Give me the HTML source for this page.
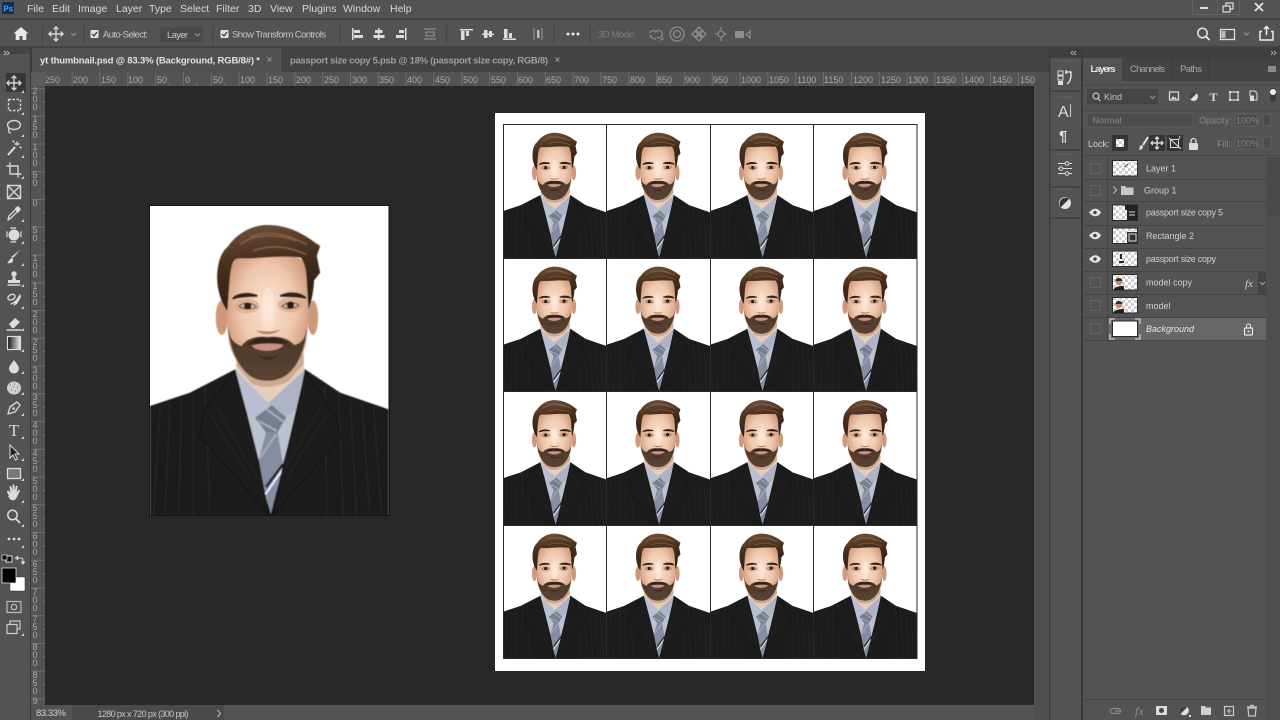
<!DOCTYPE html>
<html><head><meta charset="utf-8"><title>Photoshop</title>
<style>
html,body{margin:0;padding:0;background:#282828;width:1280px;height:720px;overflow:hidden}
svg{display:block;font-family:"Liberation Sans",sans-serif}
.m{font-size:10.5px;fill:#d8d8d8}
.o{font-size:9.5px;fill:#c4c4c4}
.r{font-size:9px;fill:#a8a8a8}
.l{font-size:9px;fill:#cfcfcf}
.ic{fill:none;stroke:#d6d6d6;stroke-width:1.4;stroke-linecap:round;stroke-linejoin:round}
.fi{fill:#dcdcdc}
.dim{fill:none;stroke:#8a8a8a;stroke-width:1.3}
.dimf{fill:#8f8f8f}
</style></head><body>
<svg width="1280" height="720" viewBox="0 0 1280 720" xmlns="http://www.w3.org/2000/svg">
<defs>
<pattern id="ck" width="6" height="6" patternUnits="userSpaceOnUse"><rect width="6" height="6" fill="#fff"/><rect width="3" height="3" fill="#cfcfcf"/><rect x="3" y="3" width="3" height="3" fill="#cfcfcf"/></pattern>
<pattern id="hr" width="27.83" height="14" patternUnits="userSpaceOnUse" patternTransform="translate(183 72)"><path d="M.5 0V14" stroke="#6e6e6e" stroke-width="1"/><path d="M14 11V14" stroke="#6e6e6e" stroke-width="1"/></pattern>
<pattern id="vr" width="14" height="27.75" patternUnits="userSpaceOnUse" patternTransform="translate(31 199)"><path d="M0 .5H14" stroke="#6e6e6e" stroke-width="1"/><path d="M11 14H14" stroke="#6e6e6e" stroke-width="1"/></pattern>
<radialGradient id="face" cx=".5" cy=".42" r=".6"><stop offset="0" stop-color="#fae2d2"/><stop offset=".55" stop-color="#f0c8ae"/><stop offset="1" stop-color="#c98f70"/></radialGradient>
<linearGradient id="hair" x1=".3" y1="0" x2=".5" y2="1"><stop offset="0" stop-color="#6f4e37"/><stop offset=".4" stop-color="#48301f"/><stop offset="1" stop-color="#2a1d16"/></linearGradient>
<linearGradient id="beard" x1="0" y1="0" x2="0" y2="1"><stop offset="0" stop-color="#4a3629"/><stop offset="1" stop-color="#5a4333"/></linearGradient>
<linearGradient id="gr" x1="0" y1="0" x2="1" y2="0"><stop offset="0" stop-color="#111"/><stop offset="1" stop-color="#eee"/></linearGradient>
<filter id="soft" x="-5%" y="-5%" width="110%" height="110%"><feGaussianBlur stdDeviation="1.6"/></filter>
<clipPath id="pc"><rect x="30" y="15" width="715" height="927"/></clipPath>
<symbol id="p" viewBox="30 15 715 927" preserveAspectRatio="none">
<rect x="30" y="15" width="715" height="927" fill="#fff"/>
<g clip-path="url(#pc)"><g filter="url(#soft)">
<path d="M30 615L150 575 285 505 495 505 600 575 745 625V950H30Z" fill="#1b1d1d"/>
<path d="M60 615L40 950M90 605L75 950M125 590L115 950M160 575L160 950M195 555L210 950M630 590L650 950M665 605L690 950M700 615L725 950M595 575L610 950M555 550L560 950" stroke="#303232" stroke-width="2" fill="none"/>
<path d="M285 505L355 790 392 938 430 790 495 510Z" fill="#bcc1d1"/>
<path d="M288 430V510L385 606 492 510V430Z" fill="#e6cfba"/>
<path d="M290 495L335 548Q385 572 445 540L490 490V460H290Z" fill="#cba992"/>
<path d="M286 505L290 510 385 606 345 650 320 612Z" fill="#b9bfd0"/>
<path d="M494 506L490 510 385 606 438 650 468 625Z" fill="#aeb4c6"/>
<path d="M345 650L395 612 438 650 412 695 378 695Z" fill="#767f8e"/>
<path d="M378 695L355 780 375 885 392 935 430 795 412 695Z" fill="#858da1"/>
<path d="M356 660L410 690M380 625L430 662M360 770L408 700" stroke="#a9afc0" stroke-width="6" fill="none"/>
<path d="M376 880L428 805" stroke="#eef" stroke-width="6"/><path d="M378 858L428 790" stroke="#1d1f22" stroke-width="7"/>
<path d="M285 510L190 630 180 705 385 940 355 780 320 640Z" fill="#1c1d1d" stroke="#0f1010" stroke-width="3"/>
<path d="M495 510L590 650 600 712 400 940 430 790 470 640Z" fill="#1c1d1d" stroke="#0f1010" stroke-width="3"/>
<path d="M210 640L330 830M230 620L350 830M560 640L440 830M540 620L420 830" stroke="#2c2e2e" stroke-width="2" fill="none"/>
<ellipse cx="245" cy="350" rx="18" ry="52" fill="#cf987a"/><ellipse cx="518" cy="350" rx="16" ry="52" fill="#cf987a"/>
<path d="M262 210C262 175 285 160 380 160 475 160 502 175 502 210 508 300 505 380 497 430 480 490 430 535 382 537 330 535 285 490 268 430 260 380 258 300 262 210Z" fill="url(#face)"/>
<ellipse cx="385" cy="330" rx="20" ry="70" fill="#fff3ea" opacity=".35"/>
<ellipse cx="320" cy="315" rx="38" ry="22" fill="#d7a487" opacity=".65"/><ellipse cx="450" cy="312" rx="38" ry="22" fill="#d7a487" opacity=".65"/>
<path d="M263 375C268 430 285 490 330 525 360 545 410 545 442 520 482 488 496 430 502 375L497 395C493 420 475 430 462 432 450 415 420 403 382 408 345 403 315 415 305 435 290 430 272 420 268 395Z" fill="url(#beard)"/>
<path d="M322 432C345 410 372 402 382 412 392 402 425 410 447 430 420 424 345 424 322 432Z" fill="#33241b"/>
<path d="M335 434C352 426 412 426 430 432 415 454 350 456 335 434Z" fill="#c99188"/>
<path d="M350 460C365 470 400 470 418 460 405 482 365 482 350 460Z" fill="#3d2b20"/>
<path d="M350 388C360 404 405 404 420 386 405 392 370 393 350 388Z" fill="#b87f63"/>
<path d="M278 293C295 275 330 275 352 285 330 285 300 285 278 293ZM420 285C445 272 480 275 497 291 475 285 445 285 420 285Z" fill="#33241b" stroke="#33241b" stroke-width="6"/>
<path d="M297 316C312 302 335 304 349 318 335 326 310 326 297 316ZM426 316C440 301 463 302 476 313 462 324 440 325 426 316Z" fill="#d8c3b7" stroke="#4a3226" stroke-width="3"/>
<circle cx="323" cy="315" r="11" fill="#2a1b15"/><circle cx="451" cy="312" r="11" fill="#2a1b15"/>
<path d="M262 330C240 300 228 255 232 212 236 170 248 150 265 135 285 105 325 75 375 72 430 70 480 90 525 125L540 135 530 165 540 215 522 238C520 270 515 300 505 325L500 240C498 205 495 188 482 170 440 165 390 168 340 172 310 174 292 168 282 178 268 198 268 260 262 330Z" fill="url(#hair)"/>
<path d="M300 130C340 100 410 95 470 120M330 108C380 88 430 95 500 130M340 150C390 130 440 135 500 160" stroke="#7f5f44" stroke-width="5" fill="none"/>
</g></g>
</symbol>
</defs>

<!-- base -->
<rect width="1280" height="720" fill="#535353"/>
<rect x="0" y="18" width="1280" height="2" fill="#424242"/>
<rect x="0" y="46" width="1280" height="2" fill="#424242"/>
<rect x="31" y="48" width="1018" height="24" fill="#434343"/>
<rect x="0" y="48" width="30" height="6" fill="#444"/>
<rect x="32" y="48" width="249" height="24" fill="#515151"/>
<rect x="45" y="86" width="989" height="619" fill="#282828"/>
<rect x="30" y="48" width="1.4" height="672" fill="#383838"/>
<rect x="31" y="72" width="1003" height="14" fill="#535353"/>
<rect x="31" y="72" width="1003" height="14" fill="url(#hr)"/>
<rect x="31" y="86" width="14" height="619" fill="#535353"/>
<rect x="31" y="86" width="14" height="619" fill="url(#vr)"/>
<rect x="31" y="72" width="14" height="14" fill="#5c5c5c"/>
<rect x="1034" y="72" width="15" height="648" fill="#4f4f4f"/>
<rect x="31" y="705" width="1003" height="15" fill="#4c4c4c"/>
<rect x="31" y="705" width="41" height="15" fill="#535353"/>
<rect x="72" y="705" width="152" height="15" fill="#4a4a4a"/>
<rect x="224" y="705" width="810" height="15" fill="#535353"/>

<!-- menu -->
<rect x="2" y="2" width="12" height="12" rx="1.5" fill="#0a2f57"/>
<text x="3.4" y="11.4" font-size="8" font-weight="bold" fill="#4ba7f0">Ps</text>
<g class="m">
<text class="m" x="27" y="12">File</text><text class="m" x="52" y="12">Edit</text><text class="m" x="78" y="12">Image</text><text class="m" x="116" y="12">Layer</text><text class="m" x="149" y="12">Type</text><text class="m" x="180" y="12">Select</text><text class="m" x="216" y="12">Filter</text><text class="m" x="248" y="12">3D</text><text class="m" x="270" y="12">View</text><text class="m" x="302" y="12">Plugins</text><text class="m" x="343" y="12">Window</text><text class="m" x="390" y="12">Help</text>
</g>
<!-- window controls -->
<path d="M1192.5 15V.5M1217.5 15V0M1239.5 15V0M1192 14.5H1239" stroke="#636363" fill="none"/>
<rect x="1200" y="7" width="8" height="2" fill="#ddd"/>
<path d="M1223 6h7v6h-7zM1226 6V3h7v6h-3" fill="none" stroke="#ddd" stroke-width="1.2"/>
<path d="M1255 3l8 8M1263 3l-8 8" stroke="#e2e2e2" stroke-width="1.8"/>

<!-- options bar -->
<path d="M21 27l-7.5 6.5h2.2V40h3.8v-4h3v4h3.8v-6.500h2.200z" fill="#e8e8e8"/>
<path d="M42.500 25V44M84 25V44M213 25V44M340 25V44M446.500 25V44M554 25V44M590 25V44" stroke="#444" stroke-width="1.2"/>
<path d="M56 27v14M49 34h14" class="ic"/><path d="M54 29l2-2 2 2M54 39l2 2 2-2M51 32l-2 2 2 2M61 32l2 2-2 2" class="ic"/>
<path d="M71 33l2.500 2.500 2.500-2.500" class="dim"/>
<rect x="90.500" y="30" width="8" height="8" rx="1" fill="#e0e0e0"/><path d="M92 34l2 2 3-4" stroke="#333" stroke-width="1.2" fill="none"/>
<text class="o" x="103" y="37.500" textLength="45">Auto-Select:</text>
<rect x="160" y="27" width="43" height="15" fill="#4a4a4a"/>
<text class="o" x="167" y="38" textLength="21">Layer</text><path d="M195 33.500l2.500 2.500 2.500-2.500" class="dim"/>
<rect x="220.500" y="30" width="8" height="8" rx="1" fill="#e0e0e0"/><path d="M222 34l2 2 3-4" stroke="#333" stroke-width="1.2" fill="none"/>
<text class="o" x="232" y="37.500" textLength="94">Show Transform Controls</text>
<!-- align -->
<g class="fi">
<path d="M352 28h1.500v12H352zM354 30h6v3h-6zM354 35h9v3h-9z"/>
<path d="M378 28h1.500v12H378zM375 30h7.500v3H375zM373.500 35h11v3h-11z"/>
<path d="M405 28h1.500v12H405zM399 30h5v3h-5zM396 35h8v3h-8z"/>
<path d="M460 29h13v1.500h-13zM461 31h3.500v9H461zM466 31h3v5h-3z"/>
<path d="M482 33.500h12v1.500h-12zM484 30h3.500v8H484zM489 31h3v6h-3z"/>
<path d="M503 38.500h13v1.500h-13zM504 29h3.500v9H504zM509 33h3v5h-3z"/>
</g>
<path d="M424 29h12M424 39h12M426 32h8v4h-8z" stroke="#9a9a9a" fill="none"/>
<path d="M534 28v12M542 28v12" stroke="#999"/><rect x="537" y="30" width="2.500" height="8" fill="#bbb"/>
<circle cx="568" cy="34" r="1.500" fill="#e8e8e8"/><circle cx="573" cy="34" r="1.500" fill="#e8e8e8"/><circle cx="578" cy="34" r="1.500" fill="#e8e8e8"/>
<text x="598" y="37.500" font-size="9.500" fill="#7d7d7d" textLength="38">3D Mode:</text>
<g class="dim">
<path d="M650 33c1-3 5-3 6-1 2-3 7-1 6 2 1 3-3 5-5 3M650 35c1 3 3 4 6 4M664 38c-1 1-2 2-4 2"/>
<circle cx="677" cy="34" r="7"/><circle cx="677" cy="34" r="3.500"/>
<path d="M699 27l3 3-3 3-3-3zM699 35l3 3-3 3-3-3zM695 31l3 3-3 3-3-3zM703 31l3 3-3 3-3-3z"/>
<path d="M721 27v3M721 38v3M715 34h3M724 34h3"/><circle cx="721" cy="34" r="3"/>
</g>
<rect x="735" y="31" width="9" height="7" fill="#8f8f8f"/><path d="M746 34.500l4-3.500v7z" class="dim"/>
<!-- right options -->
<circle cx="1202.500" cy="33" r="4.700" fill="none" stroke="#e6e6e6" stroke-width="1.500"/><path d="M1206 36.500l3.500 3.500" stroke="#e6e6e6" stroke-width="1.800"/>
<rect x="1220.500" y="29.500" width="14" height="10" fill="none" stroke="#ddd" stroke-width="1.300"/><rect x="1221.500" y="31" width="4" height="7" fill="#bbb"/>
<path d="M1244 32.500l2.500 2.500 2.500-2.500" class="dim"/>
<path d="M1262 31.500h-2v8.500h13v-8.500h-2M1266.500 35v-8.500M1264 29l2.500-2.500 2.500 2.500" fill="none" stroke="#eee" stroke-width="1.500"/>

<!-- tabs -->
<text x="40" y="63.500" font-size="9.500" font-weight="bold" fill="#e2e2e2" textLength="220">yt thumbnail.psd @ 83.3% (Background, RGB/8#) *</text>
<path d="M267.500 57.500l4 4M271.500 57.500l-4 4" stroke="#999"/>
<text x="290" y="63.500" font-size="9.500" font-weight="bold" fill="#9f9f9f" textLength="258">passport size copy 5.psb @ 18% (passport size copy, RGB/8)</text>
<path d="M555.500 57.500l4 4M559.500 57.500l-4 4" stroke="#999"/>
<path d="M4 51l2 2-2 2M7 51l2 2-2 2" stroke="#bbb" fill="none"/>

<!-- rulers -->
<g class="r">
<text class="r" x="45" y="83">250</text><text class="r" x="73" y="83">200</text><text class="r" x="101" y="83">150</text><text class="r" x="128" y="83">100</text><text class="r" x="157" y="83">50</text><text class="r" x="185" y="83">0</text><text class="r" x="213" y="83">50</text><text class="r" x="240" y="83">100</text><text class="r" x="268" y="83">150</text><text class="r" x="296" y="83">200</text><text class="r" x="324" y="83">250</text><text class="r" x="352" y="83">300</text><text class="r" x="379" y="83">350</text><text class="r" x="407" y="83">400</text><text class="r" x="435" y="83">450</text><text class="r" x="463" y="83">500</text><text class="r" x="491" y="83">550</text><text class="r" x="518" y="83">600</text><text class="r" x="546" y="83">650</text><text class="r" x="574" y="83">700</text><text class="r" x="602" y="83">750</text><text class="r" x="630" y="83">800</text><text class="r" x="657" y="83">850</text><text class="r" x="685" y="83">900</text><text class="r" x="713" y="83">950</text><text class="r" x="741" y="83">1000</text><text class="r" x="769" y="83">1050</text><text class="r" x="797" y="83">1100</text><text class="r" x="824" y="83">1150</text><text class="r" x="853" y="83">1200</text><text class="r" x="881" y="83">1250</text><text class="r" x="908" y="83">1300</text><text class="r" x="936" y="83">1350</text><text class="r" x="964" y="83">1400</text><text class="r" x="992" y="83">1450</text><text class="r" x="1020" y="83">150</text>
</g>
<g class="r" text-anchor="middle">
<text class="r" x="35"><tspan x="35" y="94">2</tspan><tspan x="35" y="102">0</tspan><tspan x="35" y="110">0</tspan></text>
<text class="r" x="35"><tspan x="35" y="122">1</tspan><tspan x="35" y="130">5</tspan><tspan x="35" y="138">0</tspan></text>
<text class="r" x="35"><tspan x="35" y="150">1</tspan><tspan x="35" y="158">0</tspan><tspan x="35" y="166">0</tspan></text>
<text class="r" x="35"><tspan x="35" y="178">5</tspan><tspan x="35" y="186">0</tspan></text>
<text class="r" x="35" y="206">0</text>
<text class="r" x="35"><tspan x="35" y="233">5</tspan><tspan x="35" y="241">0</tspan></text>
<text class="r" x="35"><tspan x="35" y="261">1</tspan><tspan x="35" y="269">0</tspan><tspan x="35" y="277">0</tspan></text>
<text class="r" x="35"><tspan x="35" y="289">1</tspan><tspan x="35" y="297">5</tspan><tspan x="35" y="305">0</tspan></text>
<text class="r" x="35"><tspan x="35" y="317">2</tspan><tspan x="35" y="325">0</tspan><tspan x="35" y="333">0</tspan></text>
<text class="r" x="35"><tspan x="35" y="345">2</tspan><tspan x="35" y="353">5</tspan><tspan x="35" y="361">0</tspan></text>
<text class="r" x="35"><tspan x="35" y="373">3</tspan><tspan x="35" y="381">0</tspan><tspan x="35" y="389">0</tspan></text>
<text class="r" x="35"><tspan x="35" y="400">3</tspan><tspan x="35" y="408">5</tspan><tspan x="35" y="416">0</tspan></text>
<text class="r" x="35"><tspan x="35" y="428">4</tspan><tspan x="35" y="436">0</tspan><tspan x="35" y="444">0</tspan></text>
<text class="r" x="35"><tspan x="35" y="456">4</tspan><tspan x="35" y="464">5</tspan><tspan x="35" y="472">0</tspan></text>
<text class="r" x="35"><tspan x="35" y="484">5</tspan><tspan x="35" y="492">0</tspan><tspan x="35" y="500">0</tspan></text>
<text class="r" x="35"><tspan x="35" y="511">5</tspan><tspan x="35" y="519">5</tspan><tspan x="35" y="527">0</tspan></text>
<text class="r" x="35"><tspan x="35" y="539">6</tspan><tspan x="35" y="547">0</tspan><tspan x="35" y="555">0</tspan></text>
<text class="r" x="35"><tspan x="35" y="567">6</tspan><tspan x="35" y="575">5</tspan><tspan x="35" y="583">0</tspan></text>
<text class="r" x="35"><tspan x="35" y="595">7</tspan><tspan x="35" y="603">0</tspan><tspan x="35" y="611">0</tspan></text>
<text class="r" x="35"><tspan x="35" y="622">7</tspan><tspan x="35" y="630">5</tspan><tspan x="35" y="638">0</tspan></text>
<text class="r" x="35"><tspan x="35" y="650">8</tspan><tspan x="35" y="658">0</tspan><tspan x="35" y="666">0</tspan></text>
<text class="r" x="35"><tspan x="35" y="678">8</tspan><tspan x="35" y="686">5</tspan><tspan x="35" y="694">0</tspan></text>
<text class="r" x="35" y="704">9</text>
</g>

<!-- toolbar -->
<rect x="6" y="73" width="20" height="19" fill="#383838"/>
<g transform="translate(14 83)"><path d="M0-7V7M-7 0H7M-2-5L0-7 2-5M-2 5L0 7 2 5M-5-2L-7 0-5 2M5-2L7 0 5 2" class="ic"/></g>
<rect x="8.500" y="99.500" width="12" height="11" fill="none" stroke="#d6d6d6" stroke-width="1.400" stroke-dasharray="2.500 1.500"/>
<g transform="translate(14 127)"><ellipse cx="0" cy="-2" rx="6.500" ry="4.500" class="ic"/><path d="M-5 1c-1 3 0 4 1 5" class="ic"/></g>
<g transform="translate(14 148)"><path d="M-6 7L1-1" stroke="#ddd" stroke-width="2"/><path d="M3-6v3M1-4h4M6-1l1 1M-1-7l1 1" class="ic"/></g>
<g transform="translate(14 170)"><path d="M-4-7V4H7M-7-4H4V7" class="ic" stroke-width="2"/></g>
<g transform="translate(14 192)"><rect x="-6.500" y="-6.500" width="13" height="13" class="ic"/><path d="M-6.500-6.500L6.500 6.500M6.500-6.500L-6.500 6.500" class="ic"/></g>
<g transform="translate(14 213)"><path d="M-6 7L-5 3 2-4 4-2-3 5Z" class="ic"/><path d="M1-5L4-7 7-4 5-1 3 0Z" class="fi"/></g>
<g transform="translate(14 235)"><circle r="5.500" class="fi"/><path d="M-7-3v6M7-3v6M-3-7h6M-3 7h6" class="ic" stroke-dasharray="1.500 1.500"/></g>
<g transform="translate(14 257)"><path d="M6-7L-1 1-3 0Z" class="fi"/><path d="M-2 1C-5 2-5 5-7 6-3 7 0 5-1 2Z" class="fi"/></g>
<g transform="translate(14 278)"><circle cy="-4" r="2.700" class="fi"/><path d="M-1-2h2l1 4h-4zM-6 2h12v3h-12z" class="fi"/><path d="M-6 7h12" class="ic"/></g>
<g transform="translate(14 300)"><path d="M-6-3C-3-7 2-6 1-3-1 1-7 1-6-3ZM-3 4C2 2 4-1 6-5" class="ic"/><path d="M6-5L1 2-1 6 3 4 7-3Z" class="fi"/></g>
<g transform="translate(14 323)"><path d="M-5 1L1-5 6-1 0 5H-2Z" class="fi"/><path d="M-7 7H7" class="ic"/></g>
<rect x="7.500" y="336.500" width="13" height="13" fill="url(#gr)" stroke="#ddd" stroke-width="1.200"/>
<path d="M14 360c2 3 5 6 5 8.500a5 5 0 0 1-10 0c0-2.500 3-5.500 5-8.500z" class="fi"/>
<ellipse cx="14" cy="388" rx="7" ry="6.500" fill="#cfcfcf"/><path d="M10 385h1M14 384h1M17 387h1M11 390h1M15 391h1M13 387h1" stroke="#666"/>
<g transform="translate(14 408)"><path d="M-6 6L-4-1 3-6 6-3 1 4Z" class="ic"/><circle cx="-.5" cy=".5" r="1.300" class="fi"/></g>
<text x="14" y="436" text-anchor="middle" font-family="Liberation Serif,serif" font-size="17" fill="#dcdcdc">T</text>
<path d="M10 445v13l3-3 2.500 5 2-1-2.500-5h4z" fill="#222" stroke="#ddd"/>
<rect x="7.500" y="468.500" width="13" height="10" fill="#777" stroke="#ddd" stroke-width="1.300"/>
<path d="M9 496l-2-4c-.5-1 1-2 2-1l1.500 2-1-6c0-1.300 1.700-1.300 2 0l.8 4 .3-5.500c0-1.300 1.800-1.300 1.900 0l.2 5.500 1-4.500c.3-1.200 2-1 1.800.3l-.8 5.500 1.500-2c.7-1 2.200 0 1.600 1l-3 6c-1 2-2 3-4 3s-3-1-4.800-4.300z" class="fi"/>
<circle cx="12.500" cy="515" r="4.700" fill="none" stroke="#ddd" stroke-width="1.500"/><path d="M16 519l4 4" stroke="#ddd" stroke-width="1.800"/>
<circle cx="9" cy="539" r="1.400" class="fi"/><circle cx="14" cy="539" r="1.400" class="fi"/><circle cx="19" cy="539" r="1.400" class="fi"/>
<rect x="6" y="556" width="6" height="6" fill="#111" stroke="#ddd"/><rect x="2" y="555" width="5" height="5" fill="#111" stroke="#ddd" stroke-width=".7"/>
<path d="M17 558h4a2 2 0 0 1 2 2v3M15.500 558l2-1.500v3zM23 564l-1.500-2h3z" fill="none" stroke="#ddd"/>
<rect x="10" y="577" width="15" height="14" fill="#fff" stroke="#333" stroke-width=".5"/>
<rect x="2" y="568" width="14" height="15" fill="#000" stroke="#ddd" stroke-width=".8"/>
<rect x="7" y="601.500" width="14" height="11" fill="none" stroke="#bbb" stroke-width="1.200"/><circle cx="14" cy="607" r="2.700" fill="none" stroke="#bbb" stroke-width="1.200"/>
<path d="M7 624.500h10v9H7zM10 624.500v-3.500h10v8h-3" fill="none" stroke="#ccc" stroke-width="1.200"/>
<g fill="#ccc"><path d="M24 90l-3 3h3zM24 112l-3 3h3zM24 134l-3 3h3zM24 155l-3 3h3zM24 176l-3 3h3zM24 219l-3 3h3zM24 241l-3 3h3zM24 263l-3 3h3zM24 284l-3 3h3zM24 306l-3 3h3zM24 328l-3 3h3zM24 349l-3 3h3zM24 371l-3 3h3zM24 392l-3 3h3zM24 413l-3 3h3zM24 436l-3 3h3zM24 458l-3 3h3zM24 478l-3 3h3zM24 500l-3 3h3zM24 524l-3 3h3zM24 545l-3 3h3zM24 633l-3 3h3z"/></g>

<!-- canvas: left portrait -->
<rect x="149" y="205" width="241" height="311" fill="#141414"/>
<use href="#p" x="150" y="206" width="238.500" height="309"/>

<!-- sheet -->
<rect x="495" y="113" width="430" height="558" fill="#fff"/>
<use href="#p" x="503.500" y="124.500" width="103" height="133.500"/><use href="#p" x="607" y="124.500" width="103" height="133.500"/><use href="#p" x="710.500" y="124.500" width="103" height="133.500"/><use href="#p" x="814" y="124.500" width="103" height="133.500"/>
<use href="#p" x="503.500" y="258.500" width="103" height="133"/><use href="#p" x="607" y="258.500" width="103" height="133"/><use href="#p" x="710.500" y="258.500" width="103" height="133"/><use href="#p" x="814" y="258.500" width="103" height="133"/>
<use href="#p" x="503.500" y="392" width="103" height="133"/><use href="#p" x="607" y="392" width="103" height="133"/><use href="#p" x="710.500" y="392" width="103" height="133"/><use href="#p" x="814" y="392" width="103" height="133"/>
<use href="#p" x="503.500" y="525.500" width="103" height="133"/><use href="#p" x="607" y="525.500" width="103" height="133"/><use href="#p" x="710.500" y="525.500" width="103" height="133"/><use href="#p" x="814" y="525.500" width="103" height="133"/>
<path d="M503.500 124.500H917M503.500 258.500H917M503.500 391.500H917M503.500 525.500H917M503.500 658.500H917M503.500 124V659M606.500 124V659M710.500 124V659M813.500 124V659M917 124V659" stroke="#2a2a2a" stroke-width="1" fill="none"/>

<!-- status -->
<text x="36" y="716" font-size="9.500" fill="#cfcfcf" textLength="30">83.33%</text>
<text x="97.500" y="717" font-size="9" fill="#c4c4c4" textLength="91">1280 px x 720 px (300 ppi)</text>
<path d="M217.500 710l3 3.500-3 3.500" fill="none" stroke="#bbb"/>

<!-- right panels -->
<rect x="1049" y="48" width="231" height="10" fill="#3f3f3f"/>
<rect x="1049" y="48" width="1.500" height="672" fill="#3c3c3c"/>
<rect x="1081" y="48" width="2" height="672" fill="#3c3c3c"/>
<path d="M1076 51l-2 2 2 2M1073 51l-2 2 2 2M1271 51l2 2-2 2M1274 51l2 2-2 2" stroke="#aaa" fill="none"/>
<path d="M1050 91h31M1050 150h31M1050 187h31M1050 218h31" stroke="#3f3f3f" stroke-width="1.500"/>
<path d="M1058 61h16M1058 97h16M1058 154h16M1058 189h16" stroke="#707070" stroke-dasharray="1.500 1.500"/>
<!-- strip icons -->
<rect x="1058" y="71" width="5" height="4" fill="none" stroke="#ddd"/><rect x="1058" y="76" width="5" height="4" fill="none" stroke="#ddd"/><rect x="1058" y="81" width="5" height="4" class="fi"/>
<path d="M1066 72h5v3c0 4-1 7-4 9M1066 70v4" fill="none" stroke="#ddd" stroke-width="1.500"/>
<text x="1058" y="117" font-size="16" fill="#dedede">A</text><path d="M1070.500 104v13" stroke="#ccc"/>
<text x="1059" y="141" font-size="15" font-weight="bold" fill="#dedede">¶</text>
<path d="M1058 163.500h14M1058 168.500h14M1058 173.500h14" stroke="#ddd"/><circle cx="1067" cy="163.500" r="1.800" fill="#535353" stroke="#ddd"/><circle cx="1061" cy="168.500" r="1.800" fill="#535353" stroke="#ddd"/><circle cx="1067" cy="173.500" r="1.800" fill="#535353" stroke="#ddd"/>
<circle cx="1065" cy="203" r="6" fill="#e2e2e2"/><path d="M1060.800 207.200a6 6 0 0 1 8.400-8.400z" fill="#333"/>

<!-- panel tabs -->
<rect x="1083" y="58" width="197" height="23" fill="#434343"/>
<rect x="1083" y="58" width="39" height="23" fill="#535353"/>
<path d="M1172.500 58v23" stroke="#3d3d3d"/><path d="M1208.500 58v23" stroke="#3d3d3d"/>
<text x="1090.500" y="72" font-size="9.500" font-weight="bold" fill="#e6e6e6" textLength="25">Layers</text>
<text x="1130" y="72" font-size="9.500" fill="#a8a8a8" textLength="35">Channels</text>
<text x="1180" y="72" font-size="9.500" fill="#a8a8a8" textLength="22">Paths</text>
<rect x="1268" y="66" width="8" height="6" fill="#8a8a8a"/>
<!-- filter row -->
<rect x="1087" y="89" width="71" height="15" fill="#454545"/>
<circle cx="1096" cy="96" r="3" fill="none" stroke="#ccc" stroke-width="1.200"/><path d="M1098 98.500l2.500 2.500" stroke="#ccc" stroke-width="1.200"/>
<text x="1104" y="100" font-size="9" fill="#c4c4c4">Kind</text>
<path d="M1150 96l2.500 2.500 2.500-2.500" class="dim"/>
<rect x="1169.500" y="92" width="9" height="8" fill="none" stroke="#ddd" stroke-width="1.200"/><path d="M1171 99l2-3 1.500 2 1-1 1.500 2z" class="fi"/>
<circle cx="1193.500" cy="96.500" r="4.500" fill="#ddd"/><path d="M1190.300 99.700a4.500 4.500 0 0 1 6.400-6.400z" fill="#444"/>
<text x="1213.500" y="101" text-anchor="middle" font-family="Liberation Serif,serif" font-size="12" font-weight="bold" fill="#ddd">T</text>
<rect x="1230" y="92" width="8" height="8" fill="none" stroke="#ddd" stroke-width="1.200"/><path d="M1229 91h2v2h-2zM1237 91h2v2h-2zM1229 99h2v2h-2zM1237 99h2v2h-2z" class="fi"/>
<path d="M1250 91h5l2 2v7h-4v-4h-3z" fill="none" stroke="#ddd"/><rect x="1250" y="96" width="4" height="5" class="fi"/>
<rect x="1270" y="88" width="6" height="14" rx="3" fill="#3a3a3a"/><circle cx="1273" cy="92" r="3" fill="#eee"/>
<path d="M1083 85H1280M1083 111H1280" stroke="#474747"/>
<!-- blend row -->
<rect x="1087" y="113" width="106" height="14" fill="#4c4c4c" stroke="#5a5a5a"/>
<text x="1092.500" y="123.500" font-size="9" fill="#858585">Normal</text>
<text x="1199" y="123.500" font-size="9" fill="#858585">Opacity:</text>
<rect x="1235" y="114" width="23" height="12" fill="#4c4c4c" stroke="#5f5f5f"/><text x="1236" y="123.500" font-size="9" fill="#808080">100%</text>
<rect x="1263" y="114" width="8" height="12" fill="#4c4c4c" stroke="#5f5f5f"/>
<!-- lock row -->
<text x="1088" y="147" font-size="9" fill="#cfcfcf">Lock:</text>
<rect x="1112" y="135" width="16" height="16" fill="#343434"/><rect x="1116" y="139" width="8" height="8" fill="url(#ck)"/>
<path d="M1148 137l-5 8" stroke="#ddd" stroke-width="2"/><path d="M1139 150c2 0 4-1 4-4l-2-1c-2 1-1 4-2 5z" class="fi"/>
<rect x="1149" y="135" width="16" height="16" fill="#343434"/>
<path d="M1157 137v12M1151 143h12M1155.500 138.500l1.500-1.500 1.500 1.500M1155.500 147.500l1.500 1.500 1.500-1.500M1152.500 141.500l-1.500 1.500 1.500 1.500M1161.500 141.500l1.500 1.500-1.500 1.500" class="ic" stroke-width="1"/>
<rect x="1167" y="135" width="16" height="16" fill="#343434"/>
<rect x="1170.500" y="139.500" width="8" height="8" fill="none" stroke="#ddd"/><path d="M1169 138l12 11M1180 136l-1 3" stroke="#ddd" fill="none"/>
<rect x="1189" y="143" width="9" height="7" rx="1" class="fi"/><path d="M1191 143v-2a2.500 2.500 0 0 1 5 0v2" fill="none" stroke="#ddd" stroke-width="1.300"/>
<text x="1217" y="147" font-size="9" fill="#858585">Fill:</text>
<rect x="1235" y="137" width="23" height="12" fill="#4c4c4c" stroke="#5f5f5f"/><text x="1236" y="146.500" font-size="9" fill="#808080">100%</text>
<rect x="1263" y="137" width="8" height="12" fill="#4c4c4c" stroke="#5f5f5f"/>
<path d="M1083 155.500H1280" stroke="#474747"/>

<!-- layers -->
<rect x="1108" y="318" width="158" height="22.500" fill="#676767"/>
<rect x="1266" y="157" width="14" height="563" fill="#4e4e4e"/>
<rect x="1266" y="157" width="14" height="60" fill="#4b4b4b"/>
<path d="M1083 179.500H1266M1083 201.500H1266M1083 225.500H1266M1083 248.500H1266M1083 271.500H1266M1083 294.500H1266M1083 317.500H1266M1083 340.500H1266" stroke="#444"/>
<path d="M1107.500 157V341" stroke="#444"/>
<g fill="none" stroke="#636363"><rect x="1090.500" y="163.500" width="10" height="10"/><rect x="1090.500" y="185.500" width="10" height="10"/><rect x="1090.500" y="277.500" width="10" height="10"/><rect x="1090.500" y="300.500" width="10" height="10"/><rect x="1090.500" y="323.500" width="10" height="10"/></g>
<g fill="#e6e6e6">
<path d="M1089 212.500c4-5 9-5 12 0-3 5-8 5-12 0z"/><path d="M1089 235.500c4-5 9-5 12 0-3 5-8 5-12 0z"/><path d="M1089 259c4-5 9-5 12 0-3 5-8 5-12 0z"/>
</g>
<circle cx="1095" cy="212.500" r="1.800" fill="#444"/><circle cx="1095" cy="235.500" r="1.800" fill="#444"/><circle cx="1095" cy="259" r="1.800" fill="#444"/>
<g stroke="#2a2a2a" stroke-width="1">
<rect x="1112.500" y="160.500" width="25" height="15.500" fill="url(#ck)"/>
<rect x="1112.500" y="205" width="25" height="15.500" fill="url(#ck)"/>
<rect x="1112.500" y="228" width="25" height="15.500" fill="url(#ck)"/>
<rect x="1112.500" y="251" width="25" height="15.500" fill="url(#ck)"/>
<rect x="1112.500" y="274.500" width="25" height="15.500" fill="url(#ck)"/>
<rect x="1112.500" y="297.500" width="25" height="15.500" fill="url(#ck)"/>
<rect x="1112.500" y="321" width="25" height="15.500" fill="#fff"/>
</g>
<path d="M1124 167l4-3" stroke="#444"/>
<g fill="#222"><rect x="1125" y="205" width="12" height="5"/><rect x="1127" y="210" width="10" height="10"/></g>
<path d="M1129 212h6M1129 215h6" stroke="#ddd"/>
<rect x="1127" y="232" width="11" height="11" fill="#333"/><rect x="1129" y="234" width="7" height="7" fill="none" stroke="#ddd"/>
<path d="M1121 254v5M1119 262h5" stroke="#222" stroke-width="2"/>
<path d="M1113 290c2-3 5-4 11-4v4z" fill="#1e1e1e"/><circle cx="1119" cy="281.500" r="3.500" fill="#c28a6b"/><path d="M1115.500 281c0-4 7-4 7 0z" fill="#412c20"/>
<path d="M1113 313c2-3 5-4 11-4v4z" fill="#1e1e1e"/><circle cx="1119" cy="304.500" r="3.500" fill="#c28a6b"/><path d="M1115.500 304c0-4 7-4 7 0z" fill="#412c20"/>
<path d="M1110 324v-5h5M1140 324v-5h-5M1110 334v5h5M1140 334v5h-5" stroke="#e4e4e4" stroke-width="1" fill="none"/>
<path d="M1113.500 186.500l3 3.500-3 3.500" fill="none" stroke="#bbb"/>
<path d="M1121 186h4l1 1.500h7.500v7.500h-12.500z" fill="#c8c8c8"/>
<text class="l" x="1146" y="171.500">Layer 1</text>
<text class="l" x="1144" y="193.500">Group 1</text>
<text class="l" x="1146" y="215.500" textLength="77">passport size copy 5</text>
<text class="l" x="1146" y="239">Rectangle 2</text>
<text class="l" x="1146" y="262" textLength="70">passport size copy</text>
<text class="l" x="1146" y="285.500">model copy</text>
<text class="l" x="1146" y="309">model</text>
<text x="1146" y="332" font-size="9" font-style="italic" fill="#e8e8e8">Background</text>
<text x="1245" y="287" font-family="Liberation Serif,serif" font-size="11" font-style="italic" fill="#cfcfcf">fx</text>
<rect x="1258" y="271" width="8" height="23" fill="#444"/><path d="M1260 282l2.500 2.500 2.500-2.500" stroke="#aaa" fill="none"/>
<rect x="1244.500" y="328" width="8" height="7" rx="1" fill="none" stroke="#e8e8e8" stroke-width="1.200"/><path d="M1246.500 328v-2a2 2 0 0 1 4 0v2" fill="none" stroke="#e8e8e8"/><circle cx="1248.500" cy="331.500" r="1" fill="#e8e8e8"/>

<!-- panel footer -->
<path d="M1083 699.500H1266" stroke="#474747"/>
<path d="M1113 708.500h5a2.500 2.500 0 0 1 0 5h-5a2.500 2.500 0 0 1 0-5zM1115 711h5" fill="none" stroke="#8a8a8a" stroke-width="1.200"/>
<text x="1135" y="715" font-family="Liberation Serif,serif" font-size="12" font-style="italic" fill="#8e8e8e">fx</text>
<rect x="1156" y="706" width="11" height="9" class="fi"/><circle cx="1161.500" cy="710.500" r="2.500" fill="#444"/>
<circle cx="1184" cy="710.500" r="4.800" fill="#e0e0e0"/><path d="M1180.600 713.900a4.800 4.800 0 0 1 6.800-6.800z" fill="#444"/><rect x="1189" y="715" width="2" height="2" fill="#ddd"/>
<path d="M1201 706h4l1 1.500h5v7.500h-10z" fill="#d0d0d0"/>
<rect x="1224.500" y="706.500" width="9" height="9" fill="none" stroke="#c8c8c8" stroke-width="1.200"/><path d="M1229 708.500v5M1226.500 711h5" stroke="#c8c8c8"/>
<path d="M1248 708h8l-.7 8h-6.600zM1247 707h10M1250 705.500h4" fill="none" stroke="#c8c8c8" stroke-width="1.200"/>
</svg>
</body></html>
